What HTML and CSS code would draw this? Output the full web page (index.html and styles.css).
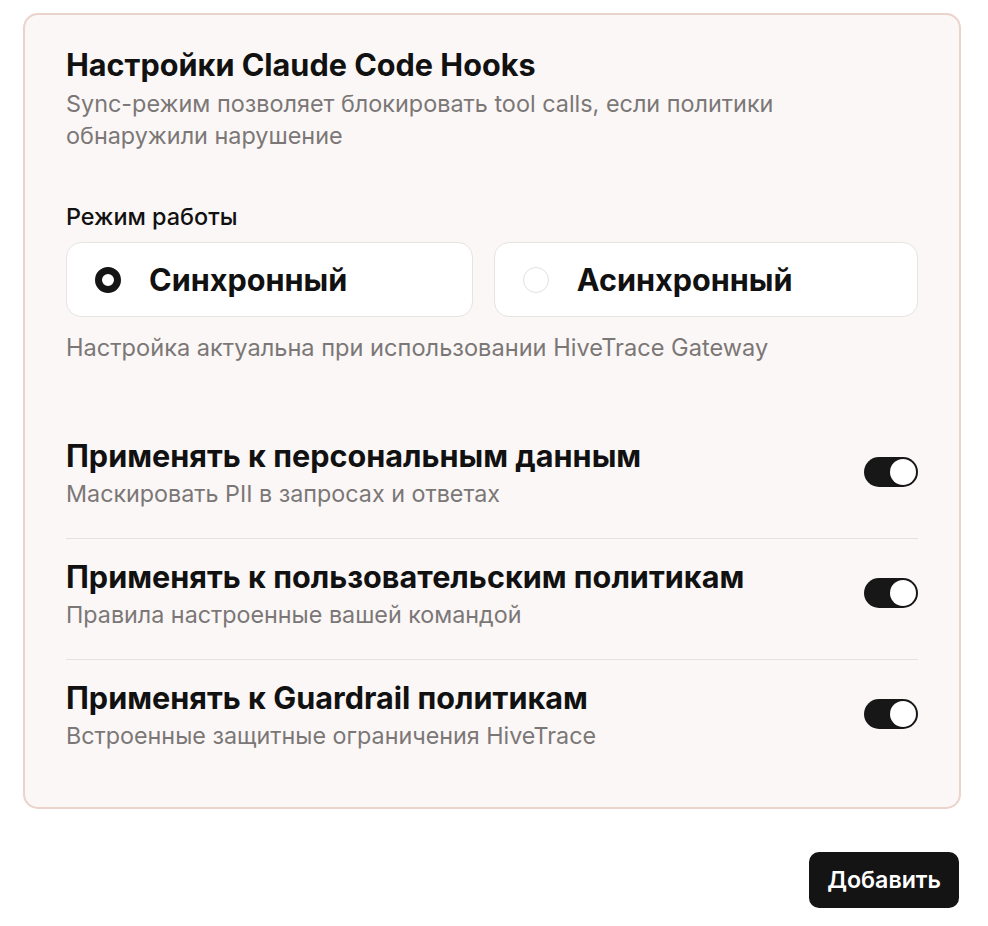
FILE: index.html
```html
<!DOCTYPE html>
<html lang="ru">
<head>
<meta charset="utf-8">
<link rel="stylesheet" href="styles.css">
</head>
<body>
<div class="page">
  <section class="card">
    <h2 class="title">Настройки Claude Code Hooks</h2>
    <p class="subtitle">Sync-режим позволяет блокировать tool calls, если политики обнаружили нарушение</p>

    <div class="label">Режим работы</div>
    <div class="modes">
      <div class="mode">
        <span class="radio radio-on"></span>
        <span class="mode-text">Синхронный</span>
      </div>
      <div class="mode">
        <span class="radio"></span>
        <span class="mode-text">Асинхронный</span>
      </div>
    </div>
    <p class="note">Настройка актуальна при использовании HiveTrace Gateway</p>

    <div class="rows">
      <div class="row">
        <div class="row-text">
          <div class="row-title">Применять к персональным данным</div>
          <div class="row-sub">Маскировать PII в запросах и ответах</div>
        </div>
        <span class="toggle"><span class="knob"></span></span>
      </div>
      <div class="row">
        <div class="row-text">
          <div class="row-title">Применять к пользовательским политикам</div>
          <div class="row-sub">Правила настроенные вашей командой</div>
        </div>
        <span class="toggle"><span class="knob"></span></span>
      </div>
      <div class="row">
        <div class="row-text">
          <div class="row-title">Применять к Guardrail политикам</div>
          <div class="row-sub">Встроенные защитные ограничения HiveTrace</div>
        </div>
        <span class="toggle"><span class="knob"></span></span>
      </div>
    </div>
  </section>

  <div class="actions">
    <button class="btn">Добавить</button>
  </div>
</div>
</body>
</html>
```

FILE: styles.css
```css
* { box-sizing: border-box; }

html, body {
  margin: 0;
  padding: 0;
  background: #ffffff;
}

body {
  font-family: Inter, "Noto Sans", "Liberation Sans", sans-serif;
  color: #111111;
}

.page {
  width: 938px;
  margin: 13px 0 0 23px;
}

.card {
  background: #fbf7f6;
  border: 2px solid #ead3ca;
  border-radius: 15px;
  padding: 33px 41px 27px 41px;
}

.title {
  margin: 0;
  font-size: 30.6px;
  line-height: 34px;
  font-weight: 700;
}

.subtitle {
  margin: 6px 0 0;
  font-size: 23.4px;
  line-height: 32px;
  color: #7b7777;
  max-width: 760px;
}

.label {
  margin-top: 51px;
  font-size: 23.4px;
  line-height: 28px;
  font-weight: 500;
}

.modes {
  display: flex;
  gap: 21px;
  margin-top: 11px;
}

.mode {
  flex: 1 1 auto;
  display: flex;
  align-items: center;
  gap: 28px;
  height: 75px;
  padding: 0 28px;
  background: #ffffff;
  border: 1.5px solid #e6e3e2;
  border-radius: 15px;
}

.radio {
  width: 26px;
  height: 26px;
  border-radius: 50%;
  border: 1.5px solid #e2e0df;
  background: #ffffff;
  flex: none;
}

.radio-on {
  border: 7px solid #151515;
}

.mode-text {
  font-size: 30.6px;
  font-weight: 700;
  line-height: 34px;
}

.note {
  margin: 16px 0 0;
  font-size: 23.6px;
  line-height: 30px;
  color: #7b7777;
}

.rows {
  margin-top: 55px;
}

.row {
  display: flex;
  align-items: center;
  justify-content: space-between;
  padding: 20px 0 29px;
  border-bottom: 1.5px solid #e4e1e0;
}

.row:last-child {
  border-bottom: none;
}

.row-title {
  font-size: 30.6px;
  line-height: 36px;
  font-weight: 700;
}

.row-sub {
  margin-top: 5px;
  font-size: 23.3px;
  line-height: 30px;
  color: #7b7777;
}

.toggle {
  position: relative;
  width: 54px;
  height: 30px;
  border-radius: 15px;
  background: #171717;
  flex: none;
  margin-bottom: 4px;
}

.knob {
  position: absolute;
  top: 2px;
  right: 2px;
  width: 26px;
  height: 26px;
  border-radius: 50%;
  background: #ffffff;
  box-shadow: 0 1px 2px rgba(0, 0, 0, 0.15);
}

.actions {
  display: flex;
  justify-content: flex-end;
  margin-top: 43px;
  padding-right: 2px;
}

.btn {
  font-family: Inter, "Noto Sans", "Liberation Sans", sans-serif;
  font-size: 23.2px;
  font-weight: 600;
  color: #ffffff;
  background: #141414;
  border: none;
  border-radius: 10px;
  height: 56px;
  padding: 0 18px;
}
```
